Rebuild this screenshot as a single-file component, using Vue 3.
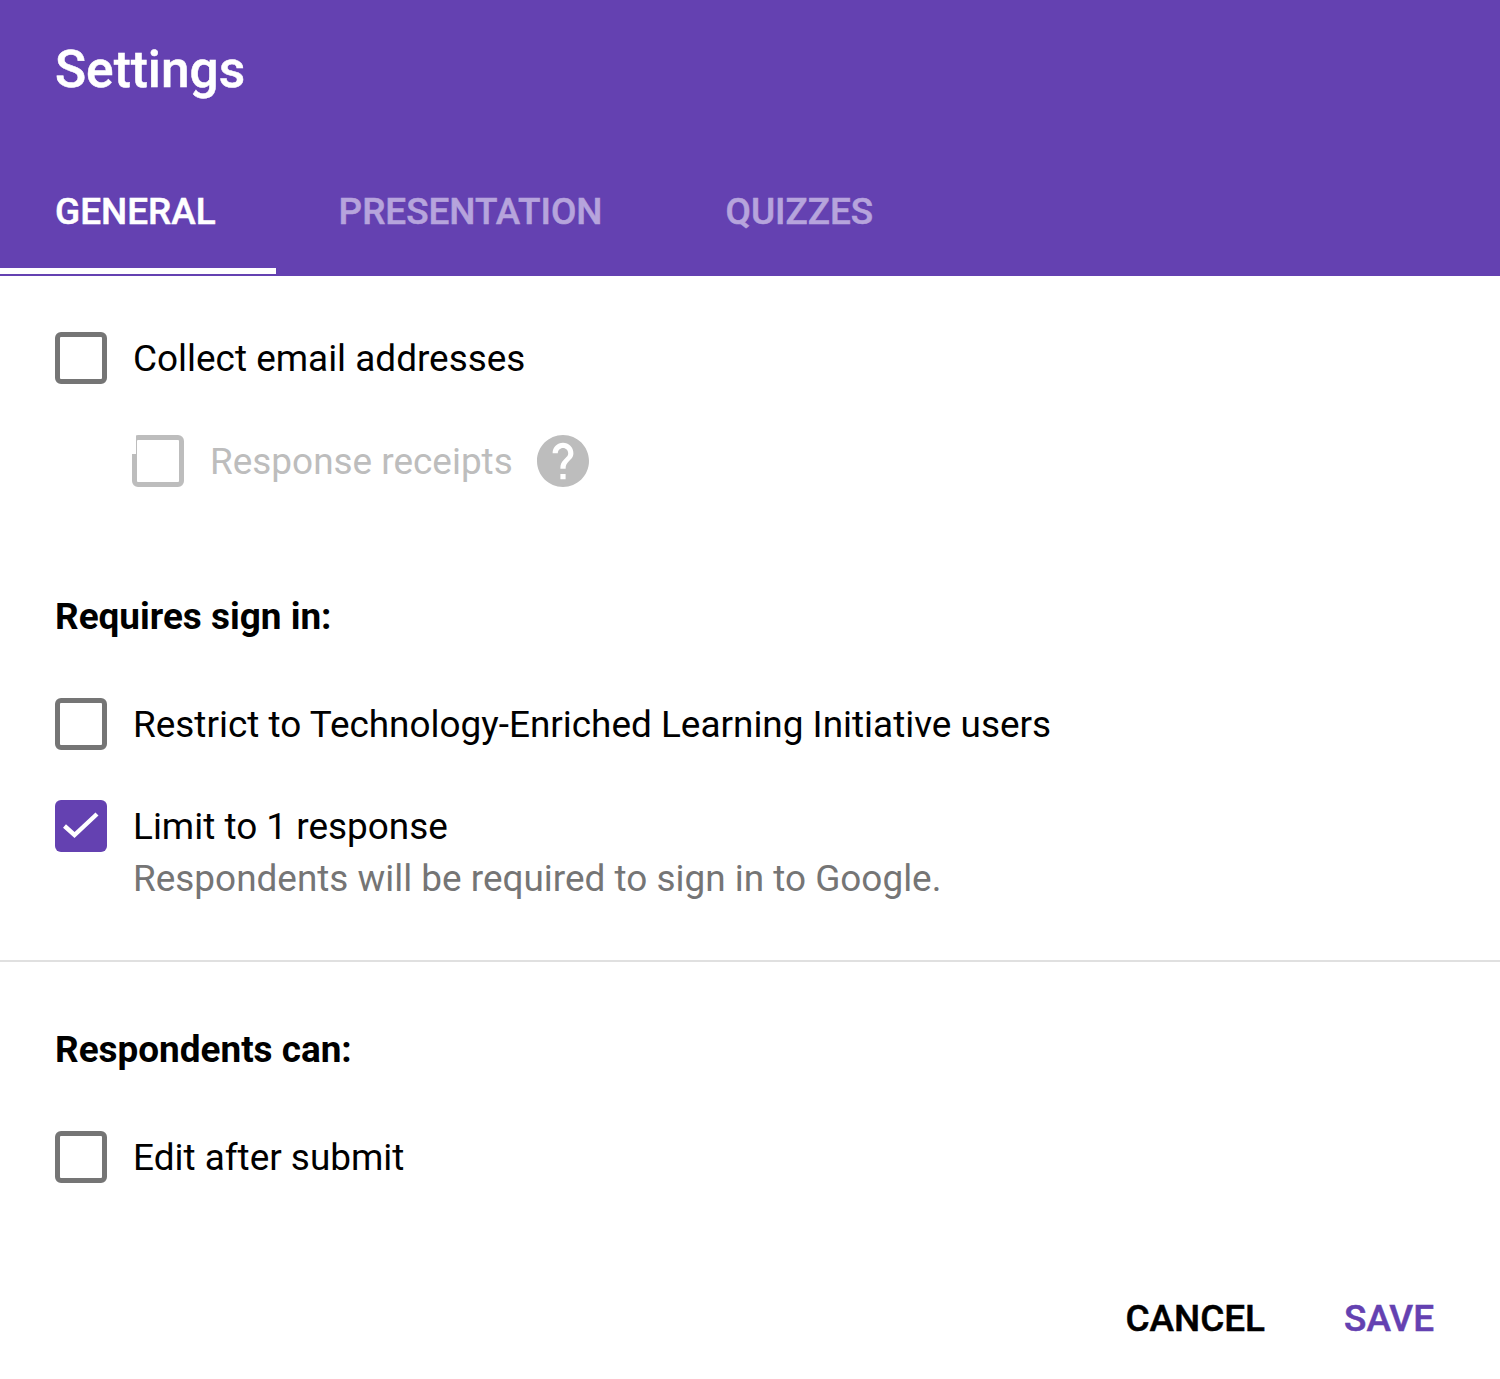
<script setup>
const tabs = [
  { label: 'GENERAL', active: true },
  { label: 'PRESENTATION', active: false },
  { label: 'QUIZZES', active: false }
]
</script>

<template>
  <div class="dialog">
    <header class="head">
      <h1 class="title">Settings</h1>
      <nav class="tabs">
        <div v-for="t in tabs" :key="t.label" class="tab" :class="{ active: t.active }">{{ t.label }}</div>
      </nav>
    </header>

    <section class="sec-one">
      <div class="row">
        <span class="box"></span>
        <span class="text">Collect email addresses</span>
      </div>
      <div class="row sub-row">
        <span class="box disabled"></span>
        <span class="text muted">Response receipts</span>
        <svg class="help" width="52" height="52" viewBox="2 2 20 20">
          <path fill="#bdbdbd" d="M12 2C6.48 2 2 6.48 2 12s4.48 10 10 10 10-4.48 10-10S17.52 2 12 2zm1 17h-2v-2h2v2zm2.07-7.75l-.9.92C13.45 12.9 13 13.5 13 15h-2v-.5c0-1.1.45-2.1 1.17-2.83l1.24-1.26c.37-.36.59-.86.59-1.41 0-1.1-.9-2-2-2s-2 .9-2 2H8c0-2.21 1.79-4 4-4s4 1.79 4 4c0 .88-.36 1.68-.93 2.25z"/>
        </svg>
      </div>
      <h2 class="heading first">Requires sign in:</h2>
      <div class="row r-restrict">
        <span class="box"></span>
        <span class="text">Restrict to Technology-Enriched Learning Initiative users</span>
      </div>
      <div class="row r-limit">
        <span class="box checked">
          <svg width="52" height="52" viewBox="0 0 52 52"><path d="M9.5 26 L19.5 35 L42 14" fill="none" stroke="#fff" stroke-width="4.4"/></svg>
        </span>
        <div class="stack">
          <span class="text">Limit to 1 response</span>
          <span class="text grey">Respondents will be required to sign in to Google.</span>
        </div>
      </div>
    </section>

    <hr class="rule" />

    <section class="sec-two">
      <h2 class="heading">Respondents can:</h2>
      <div class="row r-edit">
        <span class="box"></span>
        <span class="text">Edit after submit</span>
      </div>
    </section>

    <footer class="foot">
      <span class="btn">CANCEL</span>
      <span class="btn save">SAVE</span>
    </footer>
  </div>
</template>

<style>
html, body { margin: 0; background: #fff; }
</style>

<style scoped>
.dialog {
  width: 1500px;
  height: 1379px;
  background: #fff;
  font-family: Roboto, "Liberation Sans", sans-serif;
  overflow: hidden;
}
.head {
  height: 276px;
  box-sizing: border-box;
  background: #6441b1;
  padding-top: 39px;
}
.title {
  margin: 0 0 0 55px;
  font-size: 51.4px;
  line-height: 62px;
  font-weight: 500;
  color: #fff;
  -webkit-text-stroke: 0.5px #fff;
}
.tabs {
  display: flex;
  margin-top: 86px;
}
.tab {
  padding: 0 60px 0 63px;
  height: 87px;
  font-size: 36.9px;
  font-weight: 500;
  line-height: 50px;
  color: #b6a4dc;
  -webkit-text-stroke: 0.5px currentColor;
}
.tab:first-child { padding-left: 55px; padding-right: 60px; }
.tab.active {
  color: #fff;
  height: 81px;
  border-bottom: 6px solid #fff;
}
.sec-one { padding: 56px 0 0 55px; }
.row {
  display: flex;
  align-items: center;
}
.box {
  flex: none;
  box-sizing: border-box;
  width: 52px;
  height: 52px;
  border: 5px solid #757575;
  border-radius: 6px;
  margin-right: 26px;
  position: relative;
}
.box.disabled { border-color: #bdbdbd; }
.box.disabled::after {
  content: "";
  position: absolute;
  left: -5px;
  top: -5px;
  width: 4px;
  height: 19px;
  background: #fff;
}
.box.checked {
  border: 0;
  background: #6441b1;
  display: block;
}
.box.checked svg { display: block; }
.text {
  box-sizing: border-box;
  height: 52px;
  padding-top: 1px;
  font-size: 36.92px;
  line-height: 52px;
  color: #000;
  white-space: nowrap;
}
.muted { color: #bdbdbd; }
.grey { color: #757575; }
.sub-row {
  margin: 51px 0 0 77px;
}
.help {
  flex: none;
  display: block;
  margin-left: 24px;
}
.heading {
  margin: 0;
  font-size: 36.9px;
  font-weight: 700;
  line-height: 52px;
  color: #000;
}
.heading.first { margin-top: 104px; }
.r-restrict { margin-top: 55px; }
.r-limit { margin-top: 50px; align-items: flex-start; }
.stack { display: flex; flex-direction: column; }
.rule {
  margin: 56px 0 0;
  border: 0;
  height: 2px;
  background: #e0e0e0;
}
.sec-two { padding: 62px 0 0 55px; }
.r-edit { margin-top: 55px; }
.foot {
  display: flex;
  justify-content: flex-end;
  gap: 79px;
  margin-top: 110px;
  padding-right: 66px;
}
.btn {
  font-size: 36.9px;
  font-weight: 500;
  line-height: 52px;
  color: #000;
  -webkit-text-stroke: 0.5px currentColor;
}
.save { color: #6441b1; }
</style>
